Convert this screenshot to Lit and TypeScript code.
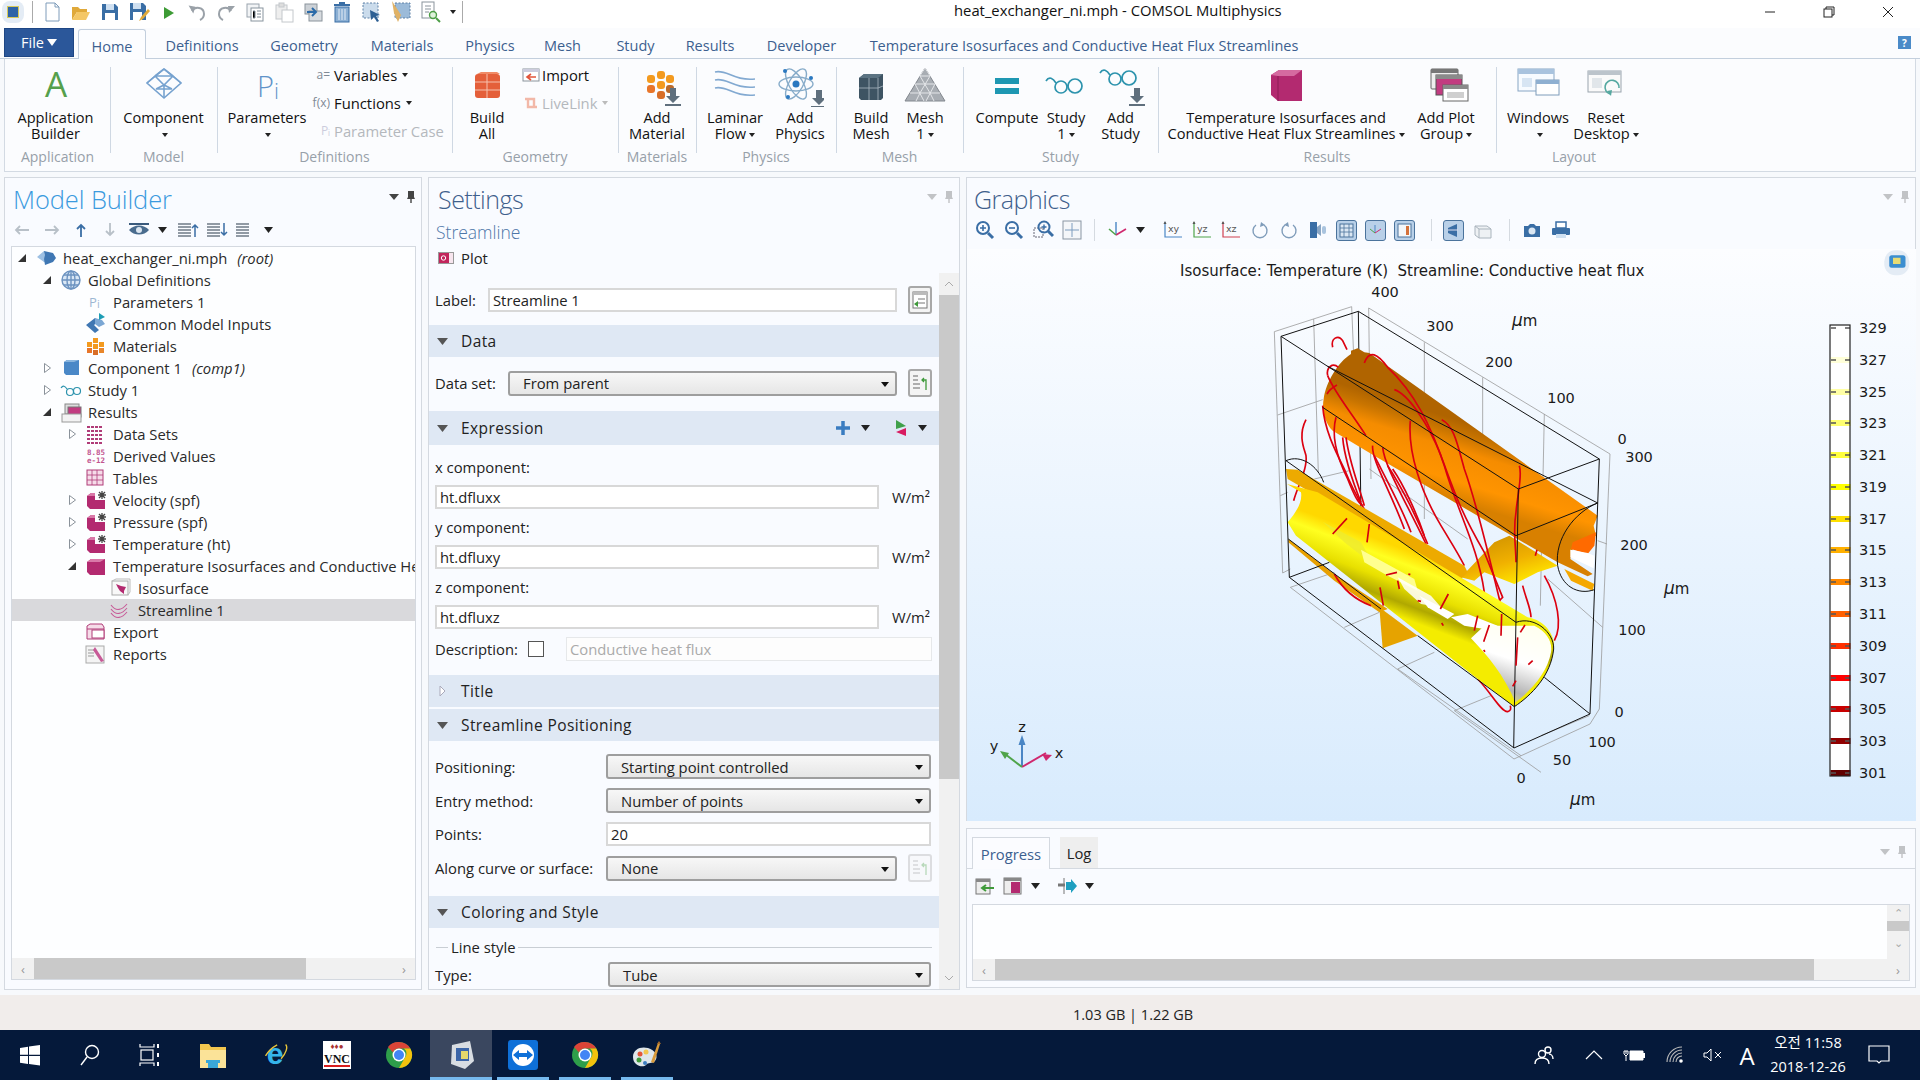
import { LitElement, html, css, svg, TemplateResult } from 'lit';
import { customElement } from 'lit/decorators.js';

const ico = (w: number, h: number, body: TemplateResult) =>
  html`<svg width=${w} height=${h} viewBox="0 0 ${w} ${h}">${body}</svg>`;

const down = svg`<path d="M37 27h6v8h4l-7 7-7-7h4z" fill="#5f6f7d"/><rect x="32" y="43" width="16" height="2" fill="#5f6f7d"/>`;
const glasses = (x: number, y: number) => svg`<g transform="translate(${x} ${y})" fill="none" stroke="#2c93ad" stroke-width="1.7"><path d="M0 4c3-5 7-3 10 2"/><circle cx="15" cy="10" r="6"/><circle cx="29" cy="9" r="7"/><path d="M21 9c1-1 1-1 2-1"/></g>`;

// ribbon icons, 48x46 box
const BIG: Record<string, TemplateResult> = {
  app: svg`<text x="24" y="36" text-anchor="middle" font-size="35" font-family="Open Sans" fill="#55a04c">A</text>`,
  comp: svg`<g fill="none" stroke="#76a2cf" stroke-width="1.6"><path d="M24 8 41 22 24 37 7 22z"/><path d="M15 15h18l8 7M33 15 41 22M15 15 7 22M15 15l9 9 9-9M24 24v13M16 28l8-4 8 4M16 28h16M24 8l9 7M24 8l-9 7"/></g>`,
  pi: svg`<text x="14" y="36" font-size="29" font-family="Open Sans" font-weight="300" fill="#5f93c9">P</text><text x="31" y="38" font-size="22" font-family="Open Sans" font-weight="300" fill="#5f93c9">i</text>`,
  build: svg`<rect x="12" y="13" width="25" height="24" rx="3" fill="#e45f3a"/><path d="M12 21h25M12 29h25M24 13v24" stroke="#f6c2ae" stroke-width="1"/><path d="M14 13 18 11h16l3 2z" fill="#f08a66"/>`,
  material: svg`<g fill="#f39a1f"><rect x="14" y="14" width="8" height="8" rx="3"/><rect x="24" y="10" width="8" height="8" rx="3"/><rect x="33" y="14" width="8" height="8" rx="3"/><rect x="24" y="20" width="8" height="8" rx="3"/><rect x="14" y="24" width="8" height="8" rx="3" fill="#e8762a"/><rect x="24" y="30" width="8" height="8" rx="3" fill="#d96e27"/><rect x="33" y="24" width="8" height="8" rx="3" fill="#bb6a2a"/></g>${down}`,
  laminar: svg`<g fill="none" stroke="#82a9d1" stroke-width="1.6"><path d="M4 11c12-3 18 9 40 7"/><path d="M4 19c12-3 18 9 40 7"/><path d="M4 27c12-3 18 9 40 7"/></g>`,
  atom: svg`<g fill="none" stroke="#86abc9" stroke-width="1.4"><ellipse cx="20" cy="23" rx="17" ry="7"/><ellipse cx="20" cy="23" rx="17" ry="7" transform="rotate(60 20 23)"/><ellipse cx="20" cy="23" rx="17" ry="7" transform="rotate(120 20 23)"/></g><g fill="#2a78c0"><circle cx="20" cy="23" r="3.5"/><circle cx="9" cy="10" r="2"/><circle cx="35" cy="17" r="2"/><circle cx="12" cy="36" r="2"/></g><g transform="translate(3 2)"><path d="M37 27h6v8h4l-7 7-7-7h4z" fill="#5f6f7d"/><rect x="32" y="43" width="16" height="2" fill="#5f6f7d"/></g>`,
  buildMesh: svg`<path d="M12 17l5-4h19v24l-2 2H14l-2-2z" fill="#3e5463"/><path d="M17 13 12 17h19l5-4z" fill="#5b7382"/><path d="M12 27h19M22 17v22M31 17v22M31 27l5-2" stroke="#a9b8c2" stroke-width=".8"/>`,
  mesh: svg`<path d="M24 7 44 40H4z" fill="#a8adb3" stroke="#82878e"/><g stroke="#e4e6e9" stroke-width="1" fill="none"><path d="M19 15h10M14 23h20M9 32h30M24 7l-5 8 10 17 4 8M24 7l5 8-10 17-4 8M14 23l9 17M34 23l-9 17"/></g>`,
  compute: svg`<rect x="12" y="17" width="24" height="6" fill="#1e97b2"/><rect x="12" y="27" width="24" height="6" fill="#1e97b2"/>`,
  study: glasses(4, 16),
  addStudy: svg`${glasses(3, 8)}${down}`,
  cube: svg`<path d="M9 14 17 9h23v31H16l-7-6z" fill="#b32a70"/><path d="M9 14 17 9h23l-8 6H16z" fill="#d56aa0"/><path d="M16 15v25" stroke="#8d1b55"/>`,
  plotGroup: svg`<rect x="9" y="8" width="27" height="20" rx="1" fill="#eee" stroke="#666"/><rect x="9" y="8" width="27" height="4" fill="#777"/><rect x="14" y="14" width="26" height="20" fill="#c23b80" stroke="#555"/><rect x="14" y="14" width="26" height="4" fill="#8a8a8a"/><rect x="21" y="24" width="25" height="16" fill="#fff" stroke="#666"/><rect x="21" y="24" width="25" height="4" fill="#8a8a8a"/><rect x="25" y="31" width="17" height="6" fill="#cfcfcf"/>`,
  windows: svg`<rect x="4" y="8" width="36" height="22" fill="#f7fbff" stroke="#88a5c4"/><rect x="4" y="8" width="36" height="5" fill="#a9c3de"/><rect x="22" y="19" width="23" height="15" fill="#fff" stroke="#7f9cba"/><rect x="22" y="19" width="23" height="4" fill="#8fb0d1"/><rect x="8" y="17" width="10" height="9" fill="#d7e5f3"/>`,
  reset: svg`<rect x="6" y="10" width="33" height="21" fill="#fafafa" stroke="#9aa4ad"/><rect x="6" y="10" width="33" height="4" fill="#bcc4cb"/><rect x="10" y="17" width="10" height="10" fill="#e1e6ea"/><path d="M37 27a7 7 0 1 0-9 6" fill="none" stroke="#55a8a0" stroke-width="1.6"/><path d="M25 30l4 5 1-6z" fill="#55a8a0"/>`,
};

const tri = (open: boolean) =>
  open
    ? html`<svg width="12" height="12" viewBox="0 0 12 12"><path d="M10 2v8H2z" fill="#333"/></svg>`
    : html`<svg width="12" height="12" viewBox="0 0 12 12"><path d="M3.5 1.5 9.5 6 3.5 10.5z" fill="#fff" stroke="#8a929a"/></svg>`;

const cube16 = svg`<path d="M2 5 6 2h14v16H5l-3-3z" fill="#b32a70"/><path d="M2 5 6 2h14l-5 3z" fill="#d978a8"/>`;
const star = svg`<rect x="10" y="-1" width="12" height="10" fill="#fdfeff"/><path d="M17 0v8M13 4h8M14 1l6 6M20 1l-6 6" stroke="#444" stroke-width="1.3"/>`;
const dotGrid = (fill: string) => svg`<g fill=${fill}>${[3, 7, 11, 15, 19].map(y => [3, 7, 11, 15].map(x => svg`<rect x=${x} y=${y} width="3" height="2"/>`))}</g>`;

const TREE: Record<string, TemplateResult> = {
  root: svg`<path d="M3 10 10 4l5 4-5 4 5 4-5-1z" fill="#9dc0e3"/><path d="M10 4l9 2 3 5-3 4-8 3-1-6 1-4z" fill="#3f77b3"/>`,
  globe: svg`<g fill="#d9e7f5" stroke="#6c93c0" stroke-width="1.4"><circle cx="12" cy="11" r="9"/><ellipse cx="12" cy="11" rx="4" ry="9" fill="none"/><path d="M3 11h18M5 6h14M5 16h14M12 2v18" fill="none"/></g>`,
  pi: svg`<text x="5" y="16" font-size="13" font-family="Open Sans" fill="#9db7d3">P</text><text x="13" y="17" font-size="11" font-family="Open Sans" fill="#9db7d3">i</text>`,
  inputs: svg`<path d="M2 12l9-7 4 3-5 4 5 5-4 3z" fill="#3f77b3"/><path d="M11 5l7 2 3 4-6 3-4-3z" fill="#7ba7d4"/><path d="M15 0v7l6-3z" fill="#1d9db5"/>`,
  materials: svg`<g fill="#f39a1f"><rect x="3" y="7" width="5" height="5"/><rect x="9" y="3" width="5" height="5"/><rect x="15" y="7" width="5" height="5"/><rect x="9" y="9" width="5" height="5"/><rect x="3" y="13" width="5" height="5" fill="#e8762a"/><rect x="9" y="15" width="5" height="5" fill="#d96e27"/><rect x="15" y="13" width="5" height="5" fill="#e8862a"/></g>`,
  comp: svg`<path d="M5 5 8 3h12v15H7l-2-2z" fill="#4a88c7"/><path d="M5 5 8 3h12l-5 2z" fill="#8bb6de"/>`,
  study: svg`<g fill="none" stroke="#2c93ad" stroke-width="1.2"><path d="M2 9c2-3 4-2 6 1"/><circle cx="11" cy="13" r="3.5"/><circle cx="18" cy="12" r="3.5"/></g>`,
  results: svg`<rect x="6" y="3" width="14" height="10" fill="#ddd" stroke="#888"/><rect x="9" y="6" width="13" height="10" fill="#c23b80" stroke="#777"/><rect x="3" y="13" width="19" height="8" fill="#f3f3f3" stroke="#999"/>`,
  datasets: dotGrid('#b03c78'),
  derived: svg`<text x="3" y="10" font-size="7.5" font-family="DejaVu Sans Mono" font-weight="700" fill="#c2558f">8.85</text><text x="3" y="18" font-size="7.5" font-family="DejaVu Sans Mono" font-weight="700" fill="#c2558f">e-12</text>`,
  tables: svg`<rect x="3" y="3" width="16" height="15" fill="#f6dce9" stroke="#b03c78"/><path d="M3 8h16M3 13h16M8 3v15M13 3v15" stroke="#b03c78" stroke-width=".8"/>`,
  plot: svg`<g transform="translate(1 2)">${cube16}${star}</g>`,
  cube: svg`<g transform="translate(1 2)">${cube16}</g>`,
  iso: svg`<rect x="3" y="4" width="16" height="14" fill="#f8f8f8" stroke="#aaa"/><path d="M3 4l4-2h14v13l-2 3" fill="none" stroke="#bbb"/><path d="M7 7l5 2 5 1-2 4 0 3-4-3-2-3z" fill="#b32a70"/>`,
  stream: svg`<g fill="none" stroke="#c75a97" stroke-width="1.1"><path d="M2 6c5 7 11 5 16-1"/><path d="M2 10c5 7 11 5 16-1"/><path d="M2 14c5 7 11 5 16-1"/></g>`,
  exportI: svg`<path d="M3 5l3-2h12l2 3v12H3z" fill="#f6dce9" stroke="#b03c78"/><rect x="8" y="9" width="12" height="8" fill="#fff" stroke="#b03c78"/><path d="M3 8h17" stroke="#b03c78"/>`,
  reports: svg`<rect x="2" y="3" width="18" height="17" fill="#f4f4f4" stroke="#aaa"/><path d="M4 7h6M4 10h6M4 13h6" stroke="#999"/><path d="M11 4l9 14-3 1-8-12z" fill="#c75a97"/>`,
};

const TREE_ROWS = [
  { l: 0, t: 'o', i: 'root', s: 'heat_exchanger_ni.mph', e: '(root)' },
  { l: 1, t: 'o', i: 'globe', s: 'Global Definitions' },
  { l: 2, i: 'pi', s: 'Parameters 1' },
  { l: 2, i: 'inputs', s: 'Common Model Inputs' },
  { l: 2, i: 'materials', s: 'Materials' },
  { l: 1, t: 'c', i: 'comp', s: 'Component 1', e: '(comp1)' },
  { l: 1, t: 'c', i: 'study', s: 'Study 1' },
  { l: 1, t: 'o', i: 'results', s: 'Results' },
  { l: 2, t: 'c', i: 'datasets', s: 'Data Sets' },
  { l: 2, i: 'derived', s: 'Derived Values' },
  { l: 2, i: 'tables', s: 'Tables' },
  { l: 2, t: 'c', i: 'plot', s: 'Velocity (spf)' },
  { l: 2, t: 'c', i: 'plot', s: 'Pressure (spf)' },
  { l: 2, t: 'c', i: 'plot', s: 'Temperature (ht)' },
  { l: 2, t: 'o', i: 'cube', s: 'Temperature Isosurfaces and Conductive Heat Flux Streamlines' },
  { l: 3, i: 'iso', s: 'Isosurface' },
  { l: 3, i: 'stream', s: 'Streamline 1', sel: true },
  { l: 2, i: 'exportI', s: 'Export' },
  { l: 2, i: 'reports', s: 'Reports' },
];

type Cell = { w: number; i: string; a?: string; b?: string; caret?: boolean };
type Group = { w: number; name: string; cells?: Cell[]; side?: 'def' | 'geo' };

const GROUPS: Group[] = [
  { w: 105, name: 'Application', cells: [{ w: 101, i: 'app', a: 'Application', b: 'Builder' }] },
  { w: 107, name: 'Model', cells: [{ w: 107, i: 'comp', a: 'Component', b: '', caret: true }] },
  { w: 235, name: 'Definitions', cells: [{ w: 100, i: 'pi', a: 'Parameters', b: '', caret: true }], side: 'def' },
  { w: 166, name: 'Geometry', cells: [{ w: 70, i: 'build', a: 'Build', b: 'All' }], side: 'geo' },
  { w: 78, name: 'Materials', cells: [{ w: 78, i: 'material', a: 'Add', b: 'Material' }] },
  { w: 140, name: 'Physics', cells: [{ w: 78, i: 'laminar', a: 'Laminar', b: 'Flow', caret: true }, { w: 52, i: 'atom', a: 'Add', b: 'Physics' }] },
  { w: 127, name: 'Mesh', cells: [{ w: 70, i: 'buildMesh', a: 'Build', b: 'Mesh' }, { w: 38, i: 'mesh', a: 'Mesh', b: '1', caret: true }] },
  { w: 195, name: 'Study', cells: [{ w: 88, i: 'compute', a: 'Compute' }, { w: 30, i: 'study', a: 'Study', b: '1', caret: true }, { w: 79, i: 'addStudy', a: 'Add', b: 'Study' }] },
  { w: 338, name: 'Results', cells: [{ w: 256, i: 'cube', a: 'Temperature Isosurfaces and', b: 'Conductive Heat Flux Streamlines', caret: true }, { w: 64, i: 'plotGroup', a: 'Add Plot', b: 'Group', caret: true }] },
  { w: 156, name: 'Layout', cells: [{ w: 84, i: 'windows', a: 'Windows', b: '', caret: true }, { w: 52, i: 'reset', a: 'Reset', b: 'Desktop', caret: true }] },
];

const TABS = [
  ['Definitions', 112], ['Geometry', 92], ['Materials', 104], ['Physics', 72], ['Mesh', 73], ['Study', 73], ['Results', 76], ['Developer', 107], ['Temperature Isosurfaces and Conductive Heat Flux Streamlines', 458],
] as [string, number][];

const QAT: TemplateResult[] = [
  svg`<path d="M6 3h9l4 4v14H6z" fill="#fff" stroke="#7f9cba"/><path d="M15 3v4h4" fill="none" stroke="#7f9cba"/>`,
  svg`<path d="M3 7h6l2 2h7v3H8l-5 8z" fill="#e0a93a"/><path d="M8 12h13l-4 8H3z" fill="#f4c766"/>`,
  svg`<path d="M4 4h13l3 3v13H4z" fill="#3a6ea5"/><rect x="8" y="4" width="8" height="6" fill="#cfe0f1"/><rect x="7" y="13" width="10" height="7" fill="#fff"/>`,
  svg`<path d="M3 3h13l3 3v14H3z" fill="#3a6ea5"/><rect x="6" y="3" width="8" height="6" fill="#cfe0f1"/><rect x="6" y="12" width="9" height="8" fill="#fff"/><path d="M12 21l2-4 7-8 2 2-7 8z" fill="#e0a93a"/>`,
  svg`<path d="M8 7l10 6-10 6z" fill="#3d9b35"/>`,
  svg`<path d="M7 11c3-5 12-4 12 3 0 3-2 5-4 6" fill="none" stroke="#9aa1a8" stroke-width="2"/><path d="M3 6l7 0-1 7z" fill="#9aa1a8" transform="rotate(10 6 9)"/>`,
  svg`<path d="M17 11c-3-5-12-4-12 3 0 3 2 5 4 6" fill="none" stroke="#9aa1a8" stroke-width="2"/><path d="M21 6l-7 0 1 7z" fill="#9aa1a8"/>`,
  svg`<rect x="4" y="4" width="12" height="13" fill="#f2f4f6" stroke="#9aa4ad"/><rect x="8" y="8" width="12" height="13" fill="#fff" stroke="#88949e"/><path d="M14 11h4M14 14h4M14 17h4M10 11h2v7h-2" stroke="#7a8894"/>`,
  svg`<rect x="4" y="5" width="11" height="14" fill="#eee" stroke="#c4c8cc"/><rect x="7" y="3" width="5" height="4" fill="#ddd" stroke="#c4c8cc"/><rect x="10" y="10" width="11" height="12" fill="#fff" stroke="#c4c8cc"/>`,
  svg`<rect x="4" y="4" width="12" height="10" fill="#ccd1d6" stroke="#8a939b"/><rect x="8" y="11" width="13" height="10" fill="#d7dbdf" stroke="#8a939b"/><path d="M6 12h9M11 8l4 4-4 4" fill="none" stroke="#2b6aa8" stroke-width="2"/>`,
  svg`<rect x="5" y="7" width="14" height="15" fill="#8cb0d4" stroke="#3a6ea5"/><rect x="4" y="4" width="16" height="2" fill="#3a6ea5"/><rect x="9" y="2" width="6" height="2" fill="#3a6ea5"/><path d="M9 9v11M12 9v11M15 9v11" stroke="#e6eef7"/>`,
  svg`<rect x="4" y="3" width="15" height="15" fill="#cbdcec" stroke="#5c80a6" stroke-dasharray="2 1.5"/><path d="M11 10l10 5-4 1 3 5-2 1-3-5-3 3z" fill="#2d5f93"/>`,
  svg`<rect x="6" y="3" width="15" height="15" fill="#9cbbd9" stroke="#5c80a6" stroke-dasharray="2 1.5"/><path d="M3 1l9 14-3 7-4-9z" fill="#e0b266"/>`,
  svg`<rect x="4" y="2" width="12" height="16" fill="#fff" stroke="#8a939b"/><path d="M7 6h6M7 9h6M7 12h4" stroke="#8a939b"/><circle cx="15" cy="15" r="3.5" fill="#dff2db" stroke="#4d9e46" stroke-width="1.4"/><path d="M18 18l4 4" stroke="#4d9e46" stroke-width="2"/>`,
];
const QAT_W = [29, 29, 29, 29, 29, 29, 29, 29, 29, 29, 29, 30, 29, 29];

const TB_G: TemplateResult[] = [
  svg`<circle cx="9" cy="9" r="6" fill="none" stroke="#3a6ea5" stroke-width="2"/><path d="M14 14l5 5" stroke="#3a6ea5" stroke-width="3"/><path d="M6 9h6M9 6v6" stroke="#3a6ea5" stroke-width="1.6"/>`,
  svg`<circle cx="9" cy="9" r="6" fill="none" stroke="#3a6ea5" stroke-width="2"/><path d="M14 14l5 5" stroke="#3a6ea5" stroke-width="3"/><path d="M6 9h6" stroke="#3a6ea5" stroke-width="1.6"/>`,
  svg`<rect x="2" y="9" width="9" height="9" fill="none" stroke="#667" stroke-dasharray="2 1"/><circle cx="12" cy="8" r="5.5" fill="none" stroke="#3a6ea5" stroke-width="2"/><path d="M16 12l5 5" stroke="#3a6ea5" stroke-width="3"/><path d="M9.5 8h5M12 5.500v5" stroke="#3a6ea5" stroke-width="1.4"/>`,
  svg`<rect x="2" y="2" width="18" height="18" fill="#f4f6f9" stroke="#8a96a3"/><path d="M11 4v14M4 11h14" stroke="#7c9cbe"/>`,
];

@customElement('plot-view')
export class PlotView extends LitElement {
  static styles = css`
    :host { display: block; flex: 1; min-height: 0; }
    .plot { display: block; background: linear-gradient(#fcfdff, #d8ebfd); }
    text { font-family: 'DejaVu Sans', sans-serif; font-size: 14.5px; fill: #1a1a1a; }
    .title { font-size: 15px; }
    .unit { font-size: 15px; }
  `;

  private labels: [string, number, number][] = [
    ['400', 1384, 298], ['300', 1439, 332], ['200', 1498, 368], ['100', 1560, 404], ['0', 1621, 445],
    ['300', 1638, 463], ['200', 1633, 551], ['100', 1631, 636], ['0', 1618, 718],
    ['100', 1601, 748], ['50', 1561, 766], ['0', 1520, 784],
  ];

  private legend = [
    ['329', '#ffffff', 329], ['327', '#ffffd8', 361], ['325', '#ffffa4', 393], ['323', '#ffff70', 424],
    ['321', '#ffff3c', 456], ['319', '#ffff00', 488], ['317', '#ffe000', 520], ['315', '#ffb000', 551],
    ['313', '#ff8800', 583], ['311', '#ff6000', 615], ['309', '#ff3000', 647], ['307', '#ff0000', 679],
    ['305', '#c80000', 710], ['303', '#900000', 742], ['301', '#600000', 774],
  ] as [string, string, number][];

  private grey = [
    'M220 158 452 83M220 158 245 882M338 120 352 580M230 408 365 362M238 650 260 640M340 600 445 575M452 83 458 230M503 87 1227 525M503 87 510 600',
    'M670 190V720M845 295V470M1030 405 1018 980M1227 525 1195 1290M505 570 800 780M1040 900 1205 1045M1190 785 1218 795M245 882 268 870M268 925 939 1440M268 925 400 880',
    'M430 1045 535 1000M590 1170 700 1120M760 1295 870 1250M939 1440 1167 1335M1167 1335 1195 1290M1020 1370 1165 1310M760 1295 1020 1480M590 1170 960 1430',
  ];

  private flows = [
    'M395 205C388 178 412 165 425 185L438 212', 'M380 290C375 265 395 250 412 265', 'M408 318C395 325 385 332 378 345',
    'M380 290C400 340 450 400 495 470', 'M365 380C370 450 400 510 430 570 450 620 470 660 505 715',
    'M405 415C390 470 410 540 440 600 460 650 470 670 485 680', 'M425 475C430 540 460 620 480 670', 'M435 475C445 550 470 610 490 680',
    'M315 422C290 470 310 510 315 530 320 570 290 620 278 665', 'M515 500C510 540 570 640 610 750', 'M520 530C550 590 600 680 630 760',
    'M545 505C550 560 610 660 675 795', 'M560 560C600 620 650 720 680 795', 'M575 570C610 620 650 710 670 770',
    'M490 252C505 210 530 225 560 265 640 340 690 440 730 560 770 700 830 800 850 940',
    'M580 332C620 345 680 430 720 530 760 640 780 700 850 820L905 955 895 965', 'M628 425C620 520 660 640 720 740 750 790 770 820 790 860',
    'M722 422C760 440 770 500 790 570 830 680 870 860 905 1000', 'M955 560C965 590 950 640 945 700 935 760 945 800 945 850',
    'M1030 890C1070 960 1085 1040 1060 1085', 'M965 920C975 960 990 990 990 1015', 'M400 885C430 940 470 965 510 980',
    'M830 1200C870 1240 900 1300 920 1298 930 1295 930 1290 928 1280',
  ];

  private dashes =
    'M395 765 438 718M498 790 505 735M555 888 588 880M622 885 628 887M590 905 595 930M537 925 547 980M650 965 660 967M718 990 742 945M722 1032 727 1040M820 1055 830 1010M848 1088 865 1038M848 1113 852 1118M900 1070 902 1005M945 1160 950 1075M958 1060 972 1038M982 1157 995 1145M935 1222 945 1205M1003 830 1008 812';

  render() {
    return html`<svg class="plot" width="949" height="572" viewBox="966 250 949 572">
      <defs>
        <linearGradient id="or" x1="0.62" y1="0.18" x2="0.38" y2="0.82">
          <stop offset=".25" stop-color="#b06400"/><stop offset=".33" stop-color="#c87400"/><stop offset=".43" stop-color="#f58c00"/><stop offset=".62" stop-color="#ff9400"/><stop offset=".74" stop-color="#d88000"/>
        </linearGradient>
        <linearGradient id="ye" x1="0.6" y1="0.2" x2="0.35" y2="0.75">
          <stop offset=".25" stop-color="#ffd800"/><stop offset=".35" stop-color="#ffff20"/><stop offset=".5" stop-color="#e8e000"/><stop offset=".62" stop-color="#b0a800"/><stop offset=".72" stop-color="#f4ec00"/>
        </linearGradient>
        <linearGradient id="wh" x1="0.7" y1="0" x2="0.35" y2="1">
          <stop offset="0" stop-color="#fffff0"/><stop offset=".45" stop-color="#ffffff"/><stop offset=".82" stop-color="#b4b4b4"/><stop offset="1" stop-color="#dddd70"/>
        </linearGradient>
        <linearGradient id="am" x1="0" y1="0" x2="0.6" y2="1">
          <stop offset="0" stop-color="#c88a00"/><stop offset=".6" stop-color="#f0b000"/><stop offset="1" stop-color="#ffe800"/>
        </linearGradient>
      </defs>
      <text class="title" x="1179" y="277">Isosurface: Temperature (K)\u00a0\u00a0Streamline: Conductive heat flux</text>
      <g transform="translate(1200 280) scale(.33333)">
        ${this.grey.map(d => svg`<path d=${d} fill="none" stroke="#9a9a9a" stroke-width="2.4"/>`)}
        <path d="M472 97 480 720" stroke="#111" stroke-width="3"/>
        <path d="M262 780 400 885 560 990 535 1000 400 905 262 790z" fill="#e8a000"/>
        <path d="M535 985 545 1108 650 1070z" fill="#e6a300"/>
        <path d="M450 215 470 208 490 220 505 222 1190 710 1178 740 1185 770 1120 790 1108 840 1175 885 1160 892 1070 850 520 530 395 455C370 430 362 390 368 360 375 310 410 250 450 225z" fill="url(#or)"/>
        <path d="M1115 790 1185 760 1180 800 1160 825 1110 810z" fill="#ff6a00"/>
        <path d="M1108 812 1160 822 1180 830 1178 868 1108 835z" fill="#fff"/>
        <path d="M1090 870 1180 915 1175 935 1110 905z" fill="#f5a800"/>
        <path d="M780 895 880 790 925 770 1070 860 1010 880 940 915 850 880 820 905z" fill="url(#am)"/>
        ${this.flows.map(d => svg`<path d=${d} fill="none" stroke="#dc0010" stroke-width="5"/>`)}
        <path d="M255 570 290 572 790 860 800 880 780 900 260 600z" fill="#edaa00"/>
        <path d="M260 730C285 700 305 670 300 640L258 615 350 640 980 1015C1040 1025 1065 1080 1058 1110 1050 1190 990 1250 940 1283L830 1200 285 770z" fill="url(#ye)"/>
        <path d="M365 728 480 790 520 860 430 790z" fill="#eeea30" opacity=".8"/>
        <path d="M480 812 640 900 650 935 560 890 490 850z" fill="#ffff90"/>
        <path d="M590 895 690 950 720 985 660 975 610 930z" fill="#fff" opacity=".85"/>
        <path d="M655 950 760 1005 740 1020 680 985z" fill="#fff"/>
        <path d="M750 1015 800 1005 890 1040 850 1050 790 1040z" fill="#fff"/>
        <path d="M810 1078 850 1040 1000 1040C1040 1060 1055 1090 1050 1120 1040 1180 990 1235 943 1270 910 1190 860 1130 810 1078z" fill="url(#wh)"/>
        <g fill="none" stroke="#111" stroke-width="3">
          <path d="M240 172 472 97 1195 540 952 630zM240 172 265 895M952 630 938 1407M1195 540 1167 1305M265 895 939 1407 1167 1305M265 895 385 850"/>
          <path d="M365 385 945 770 1190 672M380 262 1190 672M255 545 945 1030M262 780 540 990M650 1070 940 1283M1030 1195 1167 1305"/>
          <path d="M1190 672C1120 700 1060 780 1070 860 1080 920 1130 950 1180 932M255 545C300 525 350 560 368 610M945 1030C1000 1010 1060 1060 1058 1110 1050 1190 990 1250 940 1283"/>
        </g>
        <path d=${this.dashes} fill="none" stroke="#d4000f" stroke-width="5"/>
      </g>
      ${this.labels.map(([t, x, y]) => svg`<text x=${x} y=${y} text-anchor="middle">${t}</text>`)}
      <text class="unit" x="1511" y="327"><tspan font-style="italic" font-size="17">μ</tspan>m</text>
      <text class="unit" x="1663" y="595"><tspan font-style="italic" font-size="17">μ</tspan>m</text>
      <text class="unit" x="1569" y="806"><tspan font-style="italic" font-size="17">μ</tspan>m</text>
      <rect x="1829" y="326" width="20" height="451" fill="#fff"/>
      ${this.legend.map(([t, c, y]) => svg`
        <rect x="1829.500" y=${y - 3} width="20" height="6" fill=${c}/>
        <path d="M1830 ${y}h5M1844 ${y}h5" stroke="#555" stroke-width="1.5"/>
        <text x="1858" y=${y + 5}>${t}</text>`)}
      <rect x="1829" y="326" width="20" height="451" fill="none" stroke="#222" stroke-width="1.2"/>
      <g stroke-width="2" fill="none">
        <path d="M1021 768V742" stroke="#4a86c5"/><path d="M1021 768l24-14" stroke="#d0286e"/><path d="M1021 768l-17-13" stroke="#4fa44a"/>
      </g>
      <path d="M1021 736l-3.500 10h7z" fill="#4a86c5"/><path d="M1051 756l-10-1 4 7z" fill="#d0286e"/><path d="M999 752l9 2-4 6z" fill="#4fa44a"/>
      <text x="1021" y="733" text-anchor="middle" font-size="14">z</text>
      <text x="1058" y="759" text-anchor="middle">x</text>
      <text x="993" y="752" text-anchor="middle">y</text>
      <g transform="translate(1882 250) scale(1.25)"><rect x="1" y="1" width="20" height="20" rx="9" fill="#e4ecf5"/><rect x="5" y="5" width="13" height="10" rx="2" fill="#3b8ed0"/><rect x="8" y="7" width="6" height="5" fill="#e8dc74"/></g>
    </svg>`;
  }
}

@customElement('app-root')
export class AppRoot extends LitElement {
  static styles = css`
    :host { display: block; width: 1920px; height: 1080px; overflow: hidden; font-family: 'Open Sans', 'Noto Sans CJK KR', sans-serif; font-size: 14.8px; color: #222; background: #f7f9fc; }
    svg { display: block; }

    .titlebar { height: 28px; box-sizing: border-box; padding-bottom: 5px; display: flex; align-items: center; background: #fff; }
    .qat { display: flex; align-items: center; padding-left: 2px; flex-shrink: 0; }
    .qat-cell { display: flex; justify-content: center; flex-shrink: 0; }
    .app-logo { width: 22px; height: 22px; border-radius: 8px; background: #e4ecf5; display: flex; align-items: center; justify-content: center; margin-right: 8px; }
    .app-logo i { width: 10px; height: 10px; background: #2e63a6; border: 1px solid #d6c95a; display: block; }
    .vline { width: 1px; height: 22px; background: #aaa; flex-shrink: 0; }
    .caption { flex: 1; padding: 0 0 3px 491px; font-size: 14.8px; color: #111; white-space: nowrap; }
    .win-btn { width: 59px; display: flex; justify-content: center; }
    .win-end { width: 3px; }

    .tabs { height: 30px; display: flex; align-items: flex-end; background: #fbfcfe; border-bottom: 1px solid #c3cfdd; padding-left: 4px; }
    .file { width: 70px; height: 29px; background: #2b579a; color: #fff; display: flex; align-items: center; justify-content: center; gap: 3px; border: 1px solid #1e4684; box-sizing: border-box; margin-bottom: 1px; font-size: 14.5px; }
    .tab { height: 29px; padding-top: 3px; box-sizing: border-box; display: flex; align-items: center; justify-content: center; color: #3c5f8f; white-space: nowrap; flex-shrink: 0; font-size: 14.5px; }
    .tab.on { width: 68px; margin-left: 4px; margin-bottom: -1px; height: 30px; background: #fcfdff; border: 1px solid #c3cfdd; border-bottom: 0; border-radius: 3px 3px 0 0; }
    .help { margin-left: auto; margin-right: 9px; margin-bottom: 9px; width: 13px; height: 13px; background: #4a8ac8; color: #fff; font-size: 10px; font-weight: 700; display: flex; align-items: center; justify-content: center; }

    .ribbon { height: 113px; margin: 0 4px; background: #fbfcfe; border: 1px solid #d3dae3; border-top: 0; box-sizing: border-box; display: flex; }
    .group { flex-shrink: 0; display: flex; flex-direction: column; position: relative; box-sizing: border-box; }
    .group + .group::before { content: ''; position: absolute; left: 0; top: 8px; height: 86px; width: 1px; background: #cfd8e3; }
    .g-body { height: 88px; display: flex; padding-top: 2px; box-sizing: border-box; }
    .g-name { height: 20px; line-height: 20px; text-align: center; color: #97a0a9; font-size: 14px; }
    .big { flex-shrink: 0; display: flex; flex-direction: column; align-items: center; line-height: 16px; white-space: nowrap; color: #111; font-size: 14.6px; }
    .big .lines { height: 32px; margin-top: 2px; text-align: center; display: flex; flex-direction: column; align-items: center; }
    .caret { display: inline-block; width: 0; height: 0; border: 3px solid transparent; border-top: 4px solid #222; border-bottom: 0; vertical-align: middle; margin-left: 3px; }
    .caret.solo { margin: 0; }
    .smalls { display: flex; flex-direction: column; }
    .smalls.def { margin-left: -5px; }
    .small { height: 28px; line-height: 20px; display: flex; align-items: center; gap: 2px; white-space: nowrap; color: #111; }
    .small.dim { color: #b4b8bd; }
    .small.dim .caret { border-top-color: #bbb; }
    .small .si { width: 18px; font-size: 12px; color: #7f8a96; text-align: right; flex-shrink: 0; margin-right: 2px; }
    .small .si.pale { color: #ccd; }

    .panels { height: 813px; margin-top: 5px; display: flex; padding-left: 4px; gap: 6px; }
    .panel { background: #f9fbff; border: 1px solid #d4d9e0; box-sizing: border-box; display: flex; flex-direction: column; min-height: 0; }
    .p-model { width: 418px; }
    .p-settings { width: 532px; }
    .p-right { width: 950px; display: flex; flex-direction: column; gap: 7px; }
    .p-graphics { height: 644px; flex-shrink: 0; }
    .p-log { height: 160px; flex-shrink: 0; }

    .p-head { height: 41px; flex-shrink: 0; display: flex; align-items: center; padding-left: 7px; font-weight: 300; font-size: 25px; color: #3f5f8c; letter-spacing: -0.5px; }
    .p-model .p-head { height: 42px; color: #3b9ade; font-size: 25.5px; letter-spacing: -0.1px; padding-left: 8px; }
    .p-settings .p-head { padding-left: 9px; }
    .pins { margin-left: auto; margin-right: 6px; display: flex; gap: 8px; align-items: center; margin-bottom: 4px; }
    .pins.dim { opacity: .3; }

    .toolbar { height: 26px; flex-shrink: 0; display: flex; align-items: center; padding-left: 3px; }
    .p-model .toolbar { margin-top: -3px; }
    .p-graphics .toolbar { height: 30px; margin-top: -4px; margin-bottom: 4px; }
    .p-log .toolbar { height: 34px; padding-left: 2px; }
    .tb { flex-shrink: 0; display: flex; justify-content: center; align-items: center; width: 29px; }
    .tb.dd { width: 19px; }
    .tb.dd.n16 { width: 16px; }
    .tb.dd.n14 { width: 14px; }
    .tb.sp { width: 16px; }
    .tb.sp::after { content: ''; width: 1px; height: 22px; background: #d5dae0; }
    .gap4 { width: 4px; flex-shrink: 0; } .gap8 { width: 8px; flex-shrink: 0; } .gap10 { width: 10px; flex-shrink: 0; }
    .tog { width: 21px; height: 21px; border-radius: 3px; background: #b9d0e8; border: 1px solid #4b739c; box-sizing: border-box; display: flex; align-items: center; justify-content: center; }

    .tree { flex: 1; min-height: 0; margin: 3px 5px 9px 6px; border: 1px solid #d4d9e0; background: #fdfeff; display: flex; flex-direction: column; overflow: hidden; }
    .rows { flex: 1; min-height: 0; overflow: hidden; }
    .row-t { height: 22px; display: flex; align-items: center; white-space: nowrap; color: #2a2a2a; font-size: 14.8px; overflow: hidden; }
    .row-t.sel { background: #d9d9dc; }
    .t-tog { width: 14px; flex-shrink: 0; margin-right: 5px; display: flex; justify-content: center; }
    .t-ico { width: 24px; height: 22px; flex-shrink: 0; margin-right: 5px; }
    .row-t em { margin-left: 10px; font-size: 14.8px; }
    .hbar { height: 21px; flex-shrink: 0; display: flex; background: #f1f1f1; color: #999; font-size: 13px; }
    .arrow-c { width: 22px; display: flex; align-items: center; justify-content: center; flex-shrink: 0; }
    .thumb { background: #c9c9c9; }
    .grow { flex: 1; }

    .sub { height: 24px; flex-shrink: 0; padding-left: 7px; font-size: 17.5px; color: #4d76a8; line-height: 24px; margin-top: 1px; font-weight: 300; }
    .kind { height: 28px; flex-shrink: 0; padding-left: 9px; display: flex; align-items: center; gap: 7px; color: #222; }
    .s-body { flex: 1; min-height: 0; display: flex; margin-top: 1px; }
    .form { width: 510px; flex-shrink: 0; overflow: hidden; }
    .vbar { flex: 1; display: flex; flex-direction: column; background: #f1f1f1; color: #aaa; align-items: stretch; }
    .vbar .a { height: 22px; flex-shrink: 0; display: flex; justify-content: center; align-items: center; }
    .vbar .thumb { height: 484px; flex-shrink: 0; }
    .vbar .rest { flex: 1; }

    .r { display: flex; align-items: center; padding: 0 7px 0 6px; white-space: nowrap; color: #222; }
    .r.h18 { height: 18px; } .r.h28 { height: 28px; }
    .lab { flex-shrink: 0; }
    .lab.w53 { width: 53px; } .lab.w73 { width: 73px; } .lab.w93 { width: 93px; } .lab.w171 { width: 171px; } .lab.w173 { width: 173px; }
    .inp { height: 24px; box-sizing: border-box; background: #fff; border: 2px solid #d8d8d8; padding: 0 3px; line-height: 20px; display: block; }
    .sel-box { height: 25px; box-sizing: border-box; border: 2px solid #9e9e9e; border-radius: 3px; background: linear-gradient(#f7f7f7, #e6e6e6); display: flex; align-items: center; padding: 0 6px 0 13px; justify-content: space-between; color: #222; }
    .sel-box b { width: 0; height: 0; border: 4px solid transparent; border-top: 5px solid #111; border-bottom: 0; margin-top: 2px; }
    .icon-btn { width: 24px; height: 28px; box-sizing: border-box; margin-left: 11px; border: 2px solid #a8a8a8; border-radius: 3px; background: #f4f4f4; display: flex; align-items: center; justify-content: center; flex-shrink: 0; }
    .icon-btn.off { opacity: .35; }
    .sec { height: 32px; background: #dfe8f4; display: flex; align-items: center; padding-left: 7px; font-size: 15.5px; letter-spacing: .4px; color: #222; }
    .sec .ar { width: 12px; margin-right: 13px; display: flex; justify-content: center; }
    .sec.tall { height: 34px; }
    .sec-tools { margin-left: auto; margin-right: 12px; display: flex; align-items: center; gap: 10px; }
    .check { width: 16px; height: 16px; border: 1.5px solid #555; background: #fff; margin-right: 22px; flex-shrink: 0; box-sizing: border-box; }
    .unit { margin-left: 13px; }
    .ghost { flex: 1; height: 24px; box-sizing: border-box; border: 1px solid #e6e8ea; color: #aaa; padding-left: 3px; line-height: 22px; background: #fdfdfd; }
    .legend-line { display: flex; align-items: center; gap: 3px; height: 18px; padding: 0 7px; }
    .legend-line::before { content: ''; width: 12px; height: 1px; background: #c9ced4; }
    .legend-line::after { content: ''; flex: 1; height: 1px; background: #c9ced4; }
    .m2 { margin-top: 2px; } .m6 { margin-top: 6px; } .m8 { margin-top: 8px; } .m9 { margin-top: 9px; } .m10 { margin-top: 10px; } .m11 { margin-top: 11px; } .m12 { margin-top: 12px; } .m13 { margin-top: 13px; } .m14 { margin-top: 14px; }

    .log-tabs { height: 31px; margin-top: 8px; flex-shrink: 0; display: flex; align-items: flex-end; padding-left: 5px; border-bottom: 1px solid #d4d9e0; }
    .log-tab { height: 31px; padding: 0 6px; display: flex; align-items: center; box-sizing: border-box; }
    .log-tab.on { width: 78px; justify-content: center; color: #3c5f8f; border: 1px solid #d4d9e0; border-bottom: 0; height: 32px; margin-bottom: -1px; background: #fbfcff; }
    .log-tab.off { width: 38px; margin-left: 10px; justify-content: center; background: #eee; }
    .log-pins { margin-left: auto; margin-right: 3px; margin-bottom: 6px; }
    .log-box { margin: 1px 5px 6px 5px; flex: 1; min-height: 0; border: 1px solid #d4d9e0; display: grid; grid-template-columns: 1fr 22px; grid-template-rows: 1fr 21px; background: #fdfeff; }
    .log-v { background: #f1f1f1; display: flex; flex-direction: column; align-items: center; color: #aaa; font-size: 11px; }
    .log-v .t { height: 10px; width: 100%; margin: 1px 0 4px; }
    .log-h { grid-column: 1 / 3; }

    .status { height: 35px; box-sizing: border-box; padding: 3px 0 0 1073px; margin-top: 5px; background: #f1edeb; display: flex; align-items: center; font-size: 14.5px; color: #222; white-space: nowrap; }
    .taskbar { height: 50px; background: #05193a; display: flex; color: #fff; }
    .cell { flex-shrink: 0; display: flex; align-items: center; justify-content: center; height: 50px; box-sizing: border-box; }
    .cell.w60 { width: 60px; } .cell.w62 { width: 62px; } .cell.first { margin-left: 2px; }
    .cell.open { box-shadow: inset 0 -3px #76b9ed; width: 52px; margin: 0 5px; }
    .cell.now { background: #3a475f; box-shadow: inset 0 -3px #76b9ed; width: 62px; }
    .tray { margin-left: auto; display: flex; }
    .clock { flex-direction: column; font-size: 14.5px; line-height: 24px; }
    .a-ime { font-size: 24px; font-weight: 400; }
    .vnc { width: 28px; height: 28px; background: #fff; color: #111; font: 700 12px 'Liberation Serif', serif; display: flex; flex-direction: column; align-items: center; line-height: 12px; }
    .vnc small { font-size: 8px; color: #a33; }
    .vnc u { text-decoration: none; border-bottom: 2px solid #d81c1c; }
  `;

  private group(g: Group) {
    return html`<div class="group" style="width:${g.w}px">
      <div class="g-body">
        ${g.cells?.map(c => html`<div class="big" style="width:${c.w}px">
          ${ico(48, 46, BIG[c.i])}
          <div class="lines">
            <span>${c.a}</span>
            ${c.b !== undefined ? html`<span>${c.b}${c.caret ? html`<span class="caret"></span>` : ''}</span>` : ''}
          </div>
        </div>`)}
        ${g.side === 'def' ? this.defSide() : ''}
        ${g.side === 'geo' ? this.geoSide() : ''}
      </div>
      <div class="g-name">${g.name}</div>
    </div>`;
  }

  private defSide() {
    return html`<div class="smalls def">
      <div class="small"><span class="si">a=</span>Variables<span class="caret"></span></div>
      <div class="small"><span class="si">f(x)</span>Functions<span class="caret"></span></div>
      <div class="small dim"><span class="si pale">Pᵢ</span>Parameter Case</div>
    </div>`;
  }

  private geoSide() {
    return html`<div class="smalls">
      <div class="small">${ico(18, 16, svg`<rect x="1" y="2" width="16" height="12" fill="#fff" stroke="#8a939b"/><rect x="1" y="2" width="16" height="3" fill="#ccd"/><path d="M14 10H6M9 7 5 10l4 3" fill="none" stroke="#e2553a" stroke-width="1.6"/>`)}Import</div>
      <div class="small dim">${ico(18, 16, svg`<g fill="none" stroke="#f2b8a8" stroke-width="2.4"><path d="M3 4h9v7M15 12H6V5"/></g>`)}LiveLink<span class="caret"></span></div>
    </div>`;
  }

  private pins(dim = false) {
    return html`<div class="pins ${dim ? 'dim' : ''}">
      <svg width="10" height="6" viewBox="0 0 10 6"><path d="M0 0h10L5 6z" fill="#444"/></svg>
      <svg width="8" height="12" viewBox="0 0 8 12"><path d="M1 0h6v6l1 2H0l1-2zM3.300 8h1.400v4H3.300z" fill="#444"/></svg>
    </div>`;
  }

  private ddTri() {
    return html`<svg width="9" height="6" viewBox="0 0 9 6"><path d="M0 0h9L4.500 6z" fill="#222"/></svg>`;
  }

  private treeRow(r: (typeof TREE_ROWS)[number]) {
    return html`<div class="row-t ${r.sel ? 'sel' : ''}" style="padding-left:${3 + r.l * 25}px">
      <span class="t-tog">${r.t ? tri(r.t === 'o') : ''}</span>
      <span class="t-ico">${ico(24, 22, TREE[r.i])}</span>
      <span>${r.s}</span>${r.e ? html`<em>${r.e}</em>` : ''}
    </div>`;
  }

  private modelPanel() {
    const a = (d: string, c: string) => html`<span class="tb">${ico(20, 16, svg`<path d=${d} fill="none" stroke=${c} stroke-width="1.8"/>`)}</span>`;
    const lines = (extra: TemplateResult) => html`<span class="tb">${ico(24, 18, svg`<path d="M3 3h13M3 6h13M3 9h13M3 12h13M3 15h13" stroke="#6f7b87" stroke-width="1.5"/>${extra}`)}</span>`;
    return html`<div class="panel p-model">
      <div class="p-head">Model Builder ${this.pins()}</div>
      <div class="toolbar">
        ${a('M3 8h13M7 4 3 8l4 4', '#b8c0c8')}${a('M3 8h13M12 4l4 4-4 4', '#b8c0c8')}
        ${a('M10 15V3M6 7l4-4 4 4', '#3a6ea5')}${a('M10 1v12M6 9l4 4 4-4', '#b8c0c8')}
        <span class="tb">${ico(24, 16, svg`<rect x="2" y="1" width="20" height="2" fill="#3a5a7c"/><path d="M2 8c5-6 15-6 20 0-5 6-15 6-20 0z" fill="#4a6c8e"/><circle cx="12" cy="8" r="3" fill="#dce6f0"/>`)}</span>
        <span class="tb dd">${this.ddTri()}</span>
        ${lines(svg`<path d="M20 16V4M17 7l3-3 3 3" stroke="#3a6ea5" fill="none" stroke-width="1.5"/>`)}
        ${lines(svg`<path d="M20 2v12M17 11l3 3 3-3" stroke="#3a6ea5" fill="none" stroke-width="1.5"/>`)}
        ${lines(svg``)}
        <span class="tb dd">${this.ddTri()}</span>
      </div>
      <div class="tree">
        <div class="rows">${TREE_ROWS.map(r => this.treeRow(r))}</div>
        <div class="hbar">
          <span class="arrow-c">‹</span>
          <span class="thumb" style="width:272px"></span>
          <span class="grow"></span>
          <span class="arrow-c">›</span>
        </div>
      </div>
    </div>`;
  }

  private select(text: string, w: number) {
    return html`<div class="sel-box" style="width:${w}px"><span>${text}</span><b></b></div>`;
  }

  private section(name: string, open = true, extra?: TemplateResult, cls = '') {
    return html`<div class="sec ${cls}">
      <span class="ar">${open
        ? html`<svg width="11" height="7" viewBox="0 0 11 7"><path d="M0 0h11L5.500 7z" fill="#555"/></svg>`
        : html`<svg width="7" height="12" viewBox="0 0 7 12"><path d="M1 1l5 5-5 5z" fill="#fff" stroke="#aab"/></svg>`}</span>
      ${name}${extra ?? ''}
    </div>`;
  }

  private settingsPanel() {
    const listBtn = (off = false) => html`<div class="icon-btn ${off ? 'off' : ''}">${ico(18, 20, svg`<path d="M2 3h5M2 7h5M2 11h7M2 15h7" stroke="#666" stroke-width="1.2"/><path d="M15 17V7h-4M13 9l-2-2 2-2" fill="none" stroke="#3f9a3a" stroke-width="1.3"/>`)}</div>`;
    const comp = (l: string, v: string, mt: string) => html`
      <div class="r h18 ${mt}">${l} component:</div>
      <div class="r m9"><span class="inp" style="width:444px">${v}</span><span class="unit">W/m²</span></div>`;
    return html`<div class="panel p-settings">
      <div class="p-head">Settings ${this.pins(true)}</div>
      <div class="sub">Streamline</div>
      <div class="kind">${ico(16, 12, svg`<rect x=".5" y=".5" width="15" height="11" fill="#c2255c" stroke="#999"/><rect x="11" y="1" width="4" height="10" fill="#f7e5ee"/><circle cx="5.500" cy="6" r="2.200" fill="none" stroke="#fff"/>`)}Plot</div>
      <div class="s-body">
        <div class="form">
          <div class="r h28 m13"><span class="lab w53">Label:</span><span class="inp" style="width:409px">Streamline 1</span>
            <div class="icon-btn">${ico(18, 20, svg`<rect x="2" y="2" width="14" height="16" fill="#fff" stroke="#777"/><rect x="2" y="2" width="14" height="3" fill="#bbb"/><path d="M7 9h7M7 13h7" stroke="#777"/><path d="M3 14l4-3v6z" fill="#3f9a3a"/>`)}</div></div>
          <div class="m11">${this.section('Data')}</div>
          <div class="r h28 m12"><span class="lab w73">Data set:</span>${this.select('From parent', 389)}${listBtn()}</div>
          <div class="m14">${this.section('Expression', true, html`<span class="sec-tools">
            ${ico(16, 16, svg`<path d="M8 1v14M1 8h14" stroke="#3a7cc0" stroke-width="3.500"/>`)}${this.ddTri()}
            <span class="gap4"></span>
            ${ico(14, 18, svg`<path d="M2 1l10 6-10 3z" fill="#3fa04a"/><path d="M12 9v8L2 13z" fill="#d81b60"/>`)}${this.ddTri()}
          </span>`, 'tall')}</div>
          ${comp('x', 'ht.dfluxx', 'm13')}
          ${comp('y', 'ht.dfluxy', 'm9')}
          ${comp('z', 'ht.dfluxz', 'm9')}
          <div class="r m8"><span class="lab w93">Description:</span><span class="check"></span><span class="ghost">Conductive heat flux</span></div>
          <div class="m14">${this.section('Title', false)}</div>
          <div class="m2">${this.section('Streamline Positioning')}</div>
          <div class="r m13"><span class="lab w171">Positioning:</span>${this.select('Starting point controlled', 325)}</div>
          <div class="r m9"><span class="lab w171">Entry method:</span>${this.select('Number of points', 325)}</div>
          <div class="r m9"><span class="lab w171">Points:</span><span class="inp" style="width:325px">20</span></div>
          <div class="r h28 m8"><span class="lab w171">Along curve or surface:</span>${this.select('None', 291)}${listBtn(true)}</div>
          <div class="m14">${this.section('Coloring and Style')}</div>
          <div class="legend-line m10">Line style</div>
          <div class="r m6"><span class="lab w173">Type:</span>${this.select('Tube', 323)}</div>
        </div>
        <div class="vbar">
          <span class="a">${ico(12, 8, svg`<path d="M2 6l4-4 4 4" fill="none" stroke="#aaa"/>`)}</span>
          <span class="thumb"></span><span class="rest"></span>
          <span class="a">${ico(12, 8, svg`<path d="M2 2l4 4 4-4" fill="none" stroke="#aaa"/>`)}</span>
        </div>
      </div>
    </div>`;
  }

  private axisIcon(label: string, color: string) {
    return ico(24, 20, svg`<path d="M4 2v15h17" fill="none" stroke=${color} stroke-width="1.2"/><path d="M2.500 4 4 1l1.500 3z" fill="#555"/><text x="7" y="12" font-size="9.500" font-family="DejaVu Sans" fill="#555">${label}</text>`);
  }

  private graphicsPanel() {
    const t = (b: TemplateResult, cls = '') => html`<span class="tb ${cls}">${b}</span>`;
    const tog = (b: TemplateResult) => html`<span class="tb"><span class="tog">${b}</span></span>`;
    return html`<div class="panel p-graphics">
      <div class="p-head">Graphics ${this.pins(true)}</div>
      <div class="toolbar">
        ${TB_G.map(b => t(ico(22, 22, b)))}
        <span class="tb sp"></span>
        ${t(ico(24, 22, svg`<path d="M11 3v13" stroke="#4a86c5" stroke-width="1.4"/><path d="M11 16l10-6" stroke="#d0286e" stroke-width="1.6"/><path d="M11 16 4 10" stroke="#4fa44a" stroke-width="1.6"/>`))}
        ${t(this.ddTri(), 'dd')}
        <span class="gap8"></span>
        ${t(this.axisIcon('xy', '#4a86c5'))}${t(this.axisIcon('yz', '#4fa44a'))}${t(this.axisIcon('xz', '#d04050'))}
        ${t(ico(20, 20, svg`<path d="M14 5a7 7 0 1 1-8 0" fill="none" stroke="#7f9cba" stroke-width="1.4"/><path d="M11 2l4 3-5 2z" fill="#7f9cba"/>`))}
        ${t(ico(20, 20, svg`<path d="M6 5a7 7 0 1 0 8 0" fill="none" stroke="#7f9cba" stroke-width="1.4"/><path d="M9 2 5 5l5 2z" fill="#7f9cba"/>`))}
        ${t(ico(20, 20, svg`<rect x="2" y="2" width="7" height="16" fill="#3a6ea5"/><path d="M9 7l4-3v12l-4-3z" fill="#8aa6c4"/><rect x="14" y="6" width="4" height="8" rx="2" fill="#a9c3de"/>`))}
        ${tog(ico(15, 15, svg`<rect x="1" y="1" width="13" height="13" fill="#dbe7f3" stroke="#4b739c"/><path d="M1 5h13M1 9h13M5 1v13M10 1v13" stroke="#4b739c" stroke-width=".8"/>`))}
        ${tog(ico(15, 15, svg`<path d="M7 2v8" stroke="#4a86c5"/><path d="M7 10l6-4" stroke="#d0286e"/><path d="M7 10 2 6" stroke="#4fa44a"/>`))}
        ${tog(ico(15, 15, svg`<rect x="1" y="1" width="13" height="13" fill="#f4f7fa" stroke="#4b739c"/><rect x="9" y="3" width="3" height="9" fill="#d4713a"/>`))}
        <span class="gap4"></span><span class="tb sp"></span>
        ${tog(ico(15, 15, svg`<path d="M2 5l9-4v13l-9-4z" fill="#3a6ea5"/><path d="M2 7h10" stroke="#dde"/>`))}
        ${t(ico(22, 20, svg`<path d="M3 6h12l4 3v9H7l-4-3z" fill="#eef1f4" stroke="#aab4bd"/><path d="M3 6l4 3h12M7 9v9" fill="none" stroke="#aab4bd"/>`))}
        <span class="gap4"></span><span class="tb sp"></span>
        ${t(ico(18, 16, svg`<path d="M1 4h4l2-2h4l2 2h4v11H1z" fill="#3a6ea5"/><circle cx="9" cy="9" r="3.500" fill="#dbe7f3"/>`))}
        ${t(ico(20, 18, svg`<rect x="5" y="1" width="10" height="6" fill="#fff" stroke="#3a6ea5" stroke-width="1.500"/><rect x="1" y="7" width="18" height="7" rx="1" fill="#3a6ea5"/><rect x="5" y="13" width="10" height="4" fill="#cfe0f1"/>`))}
      </div>
      <plot-view></plot-view>
    </div>`;
  }

  private logPanel() {
    return html`<div class="panel p-log">
      <div class="log-tabs">
        <span class="log-tab on">Progress</span><span class="log-tab off">Log</span>
        <span class="log-pins">${this.pins(true)}</span>
      </div>
      <div class="toolbar">
        <span class="tb">${ico(22, 18, svg`<rect x="3" y="2" width="14" height="15" fill="#eee" stroke="#777"/><rect x="3" y="2" width="14" height="3" fill="#888"/><path d="M21 11H10M13 8l-4 3 4 3" fill="none" stroke="#3f9a3a" stroke-width="2"/>`)}</span>
        <span class="tb">${ico(22, 18, svg`<rect x="2" y="1" width="17" height="16" fill="#eee" stroke="#777"/><rect x="2" y="1" width="17" height="3" fill="#888"/><rect x="9" y="5" width="9" height="11" fill="#b32a70"/>`)}</span>
        <span class="tb dd n16">${this.ddTri()}</span>
        <span class="gap10"></span>
        <span class="tb">${ico(22, 18, svg`<path d="M7 1v16" stroke="#777"/><path d="M1 8h7" stroke="#777" stroke-width="3"/><path d="M9 5h5V2l6 7-6 7v-3H9z" fill="#1e9fc0"/>`)}</span>
        <span class="tb dd n14">${this.ddTri()}</span>
      </div>
      <div class="log-box">
        <div></div>
        <div class="log-v"><span>⌃</span><span class="t thumb"></span><span>⌄</span></div>
        <div class="hbar log-h">
          <span class="arrow-c">‹</span>
          <span class="thumb" style="width:819px"></span>
          <span class="grow"></span>
          <span class="arrow-c">›</span>
        </div>
      </div>
    </div>`;
  }

  private chrome() {
    return ico(28, 28, svg`<circle cx="14" cy="14" r="13" fill="#2e9e4a"/><path d="M14 1a13 13 0 0 1 11.300 6.500H14A6.500 6.500 0 0 0 8 11.500L3 6a13 13 0 0 1 11-5z" fill="#db4437"/><path d="M25.300 7.500A13 13 0 0 1 14 27l5.700-10a6.500 6.500 0 0 0-.7-9.500z" fill="#f4c20d"/><circle cx="14" cy="14" r="6.500" fill="#fff"/><circle cx="14" cy="14" r="5" fill="#4285f4"/>`);
  }

  private taskbar() {
    return html`<div class="taskbar">
      <div class="cell w60">${ico(22, 22, svg`<path d="M1 4l8-1.200v8H1zM10 2.600 21 1v9.800H10zM1 12h8v8L1 18.800zM10 12h11v9.500l-11-1.500z" fill="#fff"/>`)}</div>
      <div class="cell w60">${ico(22, 22, svg`<circle cx="13" cy="8" r="6.500" fill="none" stroke="#fff" stroke-width="1.400"/><path d="M8 13 2 21" stroke="#fff" stroke-width="1.400"/>`)}</div>
      <div class="cell w60">${ico(22, 24, svg`<path d="M1 1v3h14V1M1 23v-3h14v3" fill="none" stroke="#fff" stroke-width="1.200"/><rect x="2" y="7" width="12" height="10" fill="none" stroke="#fff" stroke-width="1.200"/><rect x="18" y="1" width="2" height="4" fill="#fff"/><rect x="18" y="10" width="2" height="4" fill="#fff"/><rect x="18" y="19" width="2" height="4" fill="#fff"/>`)}</div>
      <div class="cell w62 first">${ico(28, 28, svg`<path d="M1 3h9l2 3h15v21H1z" fill="#f3c64f"/><path d="M1 9h26v18H1z" fill="#fbe398"/><path d="M9 27v-8h10v8" fill="#3aa7d8"/><path d="M7 19h14v3H7z" fill="#3aa7d8"/>`)}</div>
      <div class="cell w62">${ico(30, 34, svg`<text x="15" y="26" text-anchor="middle" font-family="Liberation Sans" font-weight="700" font-size="30" fill="#35b4ea">e</text><ellipse cx="15" cy="17" rx="15" ry="7" transform="rotate(-45 15 17)" fill="none" stroke="#e8c53a" stroke-width="1.400" stroke-dasharray="16 30"/>`)}</div>
      <div class="cell w62"><div class="vnc"><small>♦♦●</small><u>VNC</u></div></div>
      <div class="cell w62">${this.chrome()}</div>
      <div class="cell now">${ico(30, 32, svg`<path d="M6 6 24 2l4 20-9 8-14-5z" fill="#d8dde2"/><rect x="10" y="9" width="13" height="13" fill="#3c66a8"/><rect x="15" y="12" width="7" height="8" fill="#e5d86b"/>`)}</div>
      <div class="cell open">${ico(30, 30, svg`<rect width="30" height="30" rx="3" fill="#0e70d8"/><circle cx="15" cy="15" r="11" fill="#fff"/><path d="M5 15l6-5v3h8v-3l6 5-6 5v-3h-8v3z" fill="#0e70d8"/>`)}</div>
      <div class="cell open">${this.chrome()}</div>
      <div class="cell open">${ico(32, 30, svg`<path d="M2 17C2 9 10 6 17 8c7 2 11 8 7 13-3 3-7 1-9 4-3 3-13 1-13-8z" fill="#dfe6ea"/><circle cx="9" cy="14" r="2.500" fill="#e2553a"/><circle cx="15" cy="12" r="2.500" fill="#f3c64f"/><circle cx="8" cy="20" r="2.500" fill="#3f9a3a"/><circle cx="14" cy="23" r="2" fill="#3a7cc0"/><path d="M20 22 27 3l2 1-6 19z" fill="#d99a3a"/><path d="M26 4l2-3 2 3z" fill="#a86c2a"/>`)}</div>
      <div class="tray">
        <div class="cell" style="width:40px">${ico(20, 20, svg`<g fill="none" stroke="#fff" stroke-width="1.400"><circle cx="8" cy="9" r="3.500"/><path d="M1 19c0-4 3-6 7-6s7 2 7 6"/><circle cx="14" cy="5" r="3"/><path d="M15 9c2 0 4 2 4 5"/></g>`)}</div>
        <div class="cell" style="width:10px"></div>
        <div class="cell" style="width:40px">${ico(18, 10, svg`<path d="M1 9l8-8 8 8" fill="none" stroke="#fff" stroke-width="1.200"/>`)}</div>
        <div class="cell" style="width:40px">${ico(22, 14, svg`<path d="M7 3h13v9H7z" fill="#fff" stroke="#fff"/><rect x="20" y="5" width="2" height="5" fill="#fff"/><path d="M1 3v3l2 2v5M3 3v3M1 3h4v3l-2 2" fill="none" stroke="#fff"/>`)}</div>
        <div class="cell" style="width:41px">${ico(18, 18, svg`<g fill="none" stroke="#bbb" stroke-width="1.100"><path d="M1 16a15 15 0 0 1 15-15M4 16A12 12 0 0 1 16 4M7 16a9 9 0 0 1 9-9M10 16a6 6 0 0 1 6-6"/></g><circle cx="15" cy="15" r="1.800" fill="#fff"/>`)}</div>
        <div class="cell" style="width:36px">${ico(20, 14, svg`<path d="M1 5h3l4-4v12L4 9H1z" fill="none" stroke="#fff"/><path d="M12 4l6 6M18 4l-6 6" stroke="#fff"/>`)}</div>
        <div class="cell a-ime" style="width:32px">A</div>
        <div class="cell clock" style="width:90px"><span>오전 11:58</span><span>2018-12-26</span></div>
        <div class="cell" style="width:52px">${ico(22, 22, svg`<path d="M1 2h20v15h-8l-2 2-2-2H1z" fill="none" stroke="#fff" stroke-width="1.200"/>`)}</div>
        <div class="cell" style="width:15px"></div>
      </div>
    </div>`;
  }

  render() {
    return html`
      <div class="titlebar">
        <div class="qat">
          <span class="app-logo"><i></i></span>
          <span class="vline"></span>
          <span class="gap4"></span>
          ${QAT.map((b, n) => html`<span class="qat-cell" style="width:${QAT_W[n]}px">${ico(24, 24, b)}</span>`)}
          <span class="qat-cell" style="width:18px"><span class="caret solo"></span></span>
          <span class="vline"></span>
        </div>
        <div class="caption">heat_exchanger_ni.mph - COMSOL Multiphysics</div>
        <span class="win-btn">${ico(12, 12, svg`<path d="M1 6h10" stroke="#222"/>`)}</span>
        <span class="win-btn">${ico(12, 12, svg`<rect x="1" y="3" width="8" height="8" fill="none" stroke="#222"/><path d="M3 3V1h8v8H9" fill="none" stroke="#222"/>`)}</span>
        <span class="win-btn">${ico(12, 12, svg`<path d="M1 1l10 10M11 1 1 11" stroke="#222"/>`)}</span>
        <span class="win-end"></span>
      </div>
      <div class="tabs">
        <div class="file">File <svg width="10" height="7" viewBox="0 0 10 7"><path d="M0 0h10L5 7z" fill="#fff"/></svg></div>
        <div class="tab on">Home</div>
        ${TABS.map(([t, w]) => html`<div class="tab" style="width:${w}px">${t}</div>`)}
        <div class="help">?</div>
      </div>
      <div class="ribbon">${GROUPS.map(g => this.group(g))}</div>
      <div class="panels">
        ${this.modelPanel()}
        ${this.settingsPanel()}
        <div class="p-right">${this.graphicsPanel()}${this.logPanel()}</div>
      </div>
      <div class="status">1.03 GB | 1.22 GB</div>
      ${this.taskbar()}
    `;
  }
}
